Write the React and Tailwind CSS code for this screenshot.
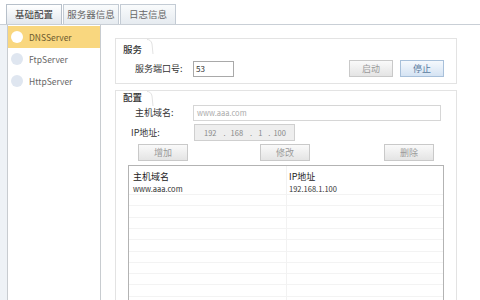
import React from "react";

const font = { fontFamily: '"Noto Sans CJK SC", "Noto Sans", sans-serif' };

function Tab({ label, active }) {
  return (
    <div
      className={
        "h-[20px] w-[56px] flex items-center justify-center border border-b-0 text-[9.5px] leading-none " +
        (active
          ? "border-[#b7c0ca] bg-gradient-to-b from-[#ffffff] to-[#e2e7ed] text-[#333]"
          : "border-[#c3cbd4] bg-gradient-to-b from-[#f9fbfc] to-[#e6ebf0] text-[#666]")
      }
    >
      {label}
    </div>
  );
}

function SideItem({ label, active }) {
  return (
    <div
      className={
        "h-[22px] flex items-center pl-[3px] gap-[6px] " +
        (active ? "bg-[#f9d77f]" : "")
      }
    >
      <div
        className={
          "w-[12px] h-[12px] rounded-full " +
          (active ? "bg-white" : "bg-[#dfe6f0]")
        }
      />
      <span className={"text-[8.5px] " + (active ? "text-[#6b5a2e]" : "text-[#666]")}>{label}</span>
    </div>
  );
}

function Btn({ label, w = 50, blue }) {
  return (
    <div
      style={{ width: w }}
      className={
        "h-[17px] flex items-center justify-center border text-[9px] leading-none " +
        (blue
          ? "border-[#a8c0da] bg-gradient-to-b from-[#f5f9fd] to-[#d5e3f3] text-[#57799e]"
          : "border-[#c9c9c9] bg-gradient-to-b from-[#fafafa] to-[#e4e4e4] text-[#9a9a9a]")
      }
    >
      {label}
    </div>
  );
}

function GroupTitle({ label }) {
  return (
    <div className="relative h-[15px] w-[35px] flex items-end pl-[7px] text-[9.5px] font-medium text-[#333]">
      <span className="leading-none">{label}</span>
      <svg className="absolute right-[-4px] top-0" width="8" height="15">
        <path d="M0 0.5 Q4 0.5 5 5 L6 15" stroke="#e2e2e2" fill="none" />
      </svg>
    </div>
  );
}

export default function App() {
  const rows = Array.from({ length: 10 });
  return (
    <div style={font} className="w-[480px] h-[300px] bg-white overflow-hidden flex flex-col">
      <div className="h-[24px] pl-[6px] pt-[4px] flex gap-[1px] items-end">
        <Tab label="基础配置" active />
        <Tab label="服务器信息" />
        <Tab label="日志信息" />
      </div>
      <div className="flex-1 flex border-t border-[#c9cfd6]">
        <div className="w-[7px] bg-[#eef2f6]" />
        <div className="w-[94px] border-l border-r border-[#c8ccd0] bg-white pt-[1px]">
          <SideItem label="DNSServer" active />
          <SideItem label="FtpServer" />
          <SideItem label="HttpServer" />
        </div>
        <div className="flex-1 pl-[14px] pt-[13px] pr-[23px]">
          <div className="h-[46px] border border-[#e3e3e3] flex flex-col">
            <GroupTitle label="服务" />
            <div className="flex items-center h-[29px]">
              <span className="ml-[19px] w-[58px] text-[9px] text-[#333]">服务端口号:</span>
              <div className="w-[41px] h-[16px] border border-[#a9a9a9] flex items-center pl-[2px] text-[8px] text-[#333]">53</div>
              <div className="flex-1" />
              <Btn label="启动" w={44} />
              <div className="w-[7px]" />
              <Btn label="停止" w={44} blue />
              <div className="w-[12px]" />
            </div>
          </div>
          <div className="mt-[6px] h-[220px] border border-[#e3e3e3] flex flex-col">
            <GroupTitle label="配置" />
            <div className="flex items-center mt-[3px] h-[17px]">
              <span className="ml-[19px] w-[58px] text-[9px] text-[#333]">主机域名:</span>
              <div className="w-[248px] h-[16px] border border-[#d6d6d6] flex items-center pl-[3px] text-[7.5px] text-[#aaa]">www.aaa.com</div>
            </div>
            <div className="flex items-center mt-[3px] h-[17px]">
              <span className="ml-[15px] w-[63px] text-[9px] text-[#333]">IP地址:</span>
              <div className="w-[101px] h-[17px] border border-[#cfcfcf] bg-[#eeeeee] flex items-center text-[7.5px] text-[#888]">
                <span className="ml-[9px]">192</span>
                <span className="ml-[7px]">.</span>
                <span className="ml-[5px]">168</span>
                <span className="ml-[7px]">.</span>
                <span className="ml-[6px]">1</span>
                <span className="ml-[6px]">.</span>
                <span className="ml-[3px]">100</span>
              </div>
            </div>
            <div className="flex items-center mt-[3px]">
              <div className="ml-[22px]"><Btn label="增加" w={50} /></div>
              <div className="ml-[72px]"><Btn label="修改" w={50} /></div>
              <div className="ml-[74px]"><Btn label="删除" w={50} /></div>
            </div>
            <div className="ml-[12px] mt-[4px] w-[316px] flex-1 border border-[#b3b3b3] bg-white relative">
              <div className="absolute top-0 bottom-0 left-[157px] w-px bg-[#f2f2f2]" />
              <div className="flex h-[17px] items-end text-[9px] text-[#222]">
                <span className="w-[160px] pl-[4px]">主机域名</span>
                <span>IP地址</span>
              </div>
              <div className="flex h-[12px] items-center text-[7.5px] text-[#333] border-b border-[#f3f3f3]">
                <span className="w-[160px] pl-[4px]">www.aaa.com</span>
                <span>192.168.1.100</span>
              </div>
              {rows.map((_, i) => (
                <div key={i} className="h-[11.3px] border-b border-[#f3f3f3]" />
              ))}
            </div>
          </div>
        </div>
      </div>
    </div>
  );
}
